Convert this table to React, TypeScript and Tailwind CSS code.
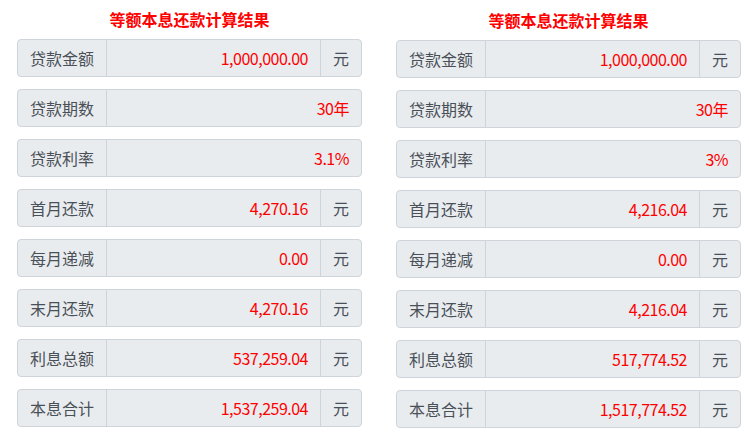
import React from "react";

type Row = { label: string; value: string; unit?: string };

const left: Row[] = [
  { label: "贷款金额", value: "1,000,000.00", unit: "元" },
  { label: "贷款期数", value: "30年" },
  { label: "贷款利率", value: "3.1%" },
  { label: "首月还款", value: "4,270.16", unit: "元" },
  { label: "每月递减", value: "0.00", unit: "元" },
  { label: "末月还款", value: "4,270.16", unit: "元" },
  { label: "利息总额", value: "537,259.04", unit: "元" },
  { label: "本息合计", value: "1,537,259.04", unit: "元" },
];

const right: Row[] = [
  { label: "贷款金额", value: "1,000,000.00", unit: "元" },
  { label: "贷款期数", value: "30年" },
  { label: "贷款利率", value: "3%" },
  { label: "首月还款", value: "4,216.04", unit: "元" },
  { label: "每月递减", value: "0.00", unit: "元" },
  { label: "末月还款", value: "4,216.04", unit: "元" },
  { label: "利息总额", value: "517,774.52", unit: "元" },
  { label: "本息合计", value: "1,517,774.52", unit: "元" },
];

function Column({ rows }: { rows: Row[] }) {
  return (
    <div className="w-[345px] flex flex-col">
      <div className="h-6 leading-6 text-center text-[16px] font-bold text-[#ff0000] mb-[8px] whitespace-nowrap">
        等额本息还款计算结果
      </div>
      <div className="flex flex-col gap-[12px]">
        {rows.map((r, i) => (
          <div
            key={i}
            className="flex h-[38px] border border-[#ced4da] rounded-[4px] bg-[#e9ecef] text-[16px] leading-6 whitespace-nowrap"
          >
            <div className="w-[89px] shrink-0 flex items-center px-[12px] text-[#495057] border-r border-[#ced4da]">
              {r.label}
            </div>
            <div className="flex-1 flex items-center justify-end px-[12px] text-[#ff0000] tracking-[-0.5px]">
              {r.value}
            </div>
            {r.unit && (
              <div className="w-[41px] shrink-0 flex items-center px-[12px] text-[#495057] border-l border-[#ced4da]">
                {r.unit}
              </div>
            )}
          </div>
        ))}
      </div>
    </div>
  );
}

export default function App() {
  return (
    <div
      className="w-[749px] h-[437px] bg-white flex pl-[17px] gap-[34px] pt-[7px] overflow-hidden"
      style={{ fontFamily: '"Noto Sans CJK SC", "Noto Sans", sans-serif' }}
    >
      <Column rows={left} />
      <div className="mt-[1px]">
        <Column rows={right} />
      </div>
    </div>
  );
}
